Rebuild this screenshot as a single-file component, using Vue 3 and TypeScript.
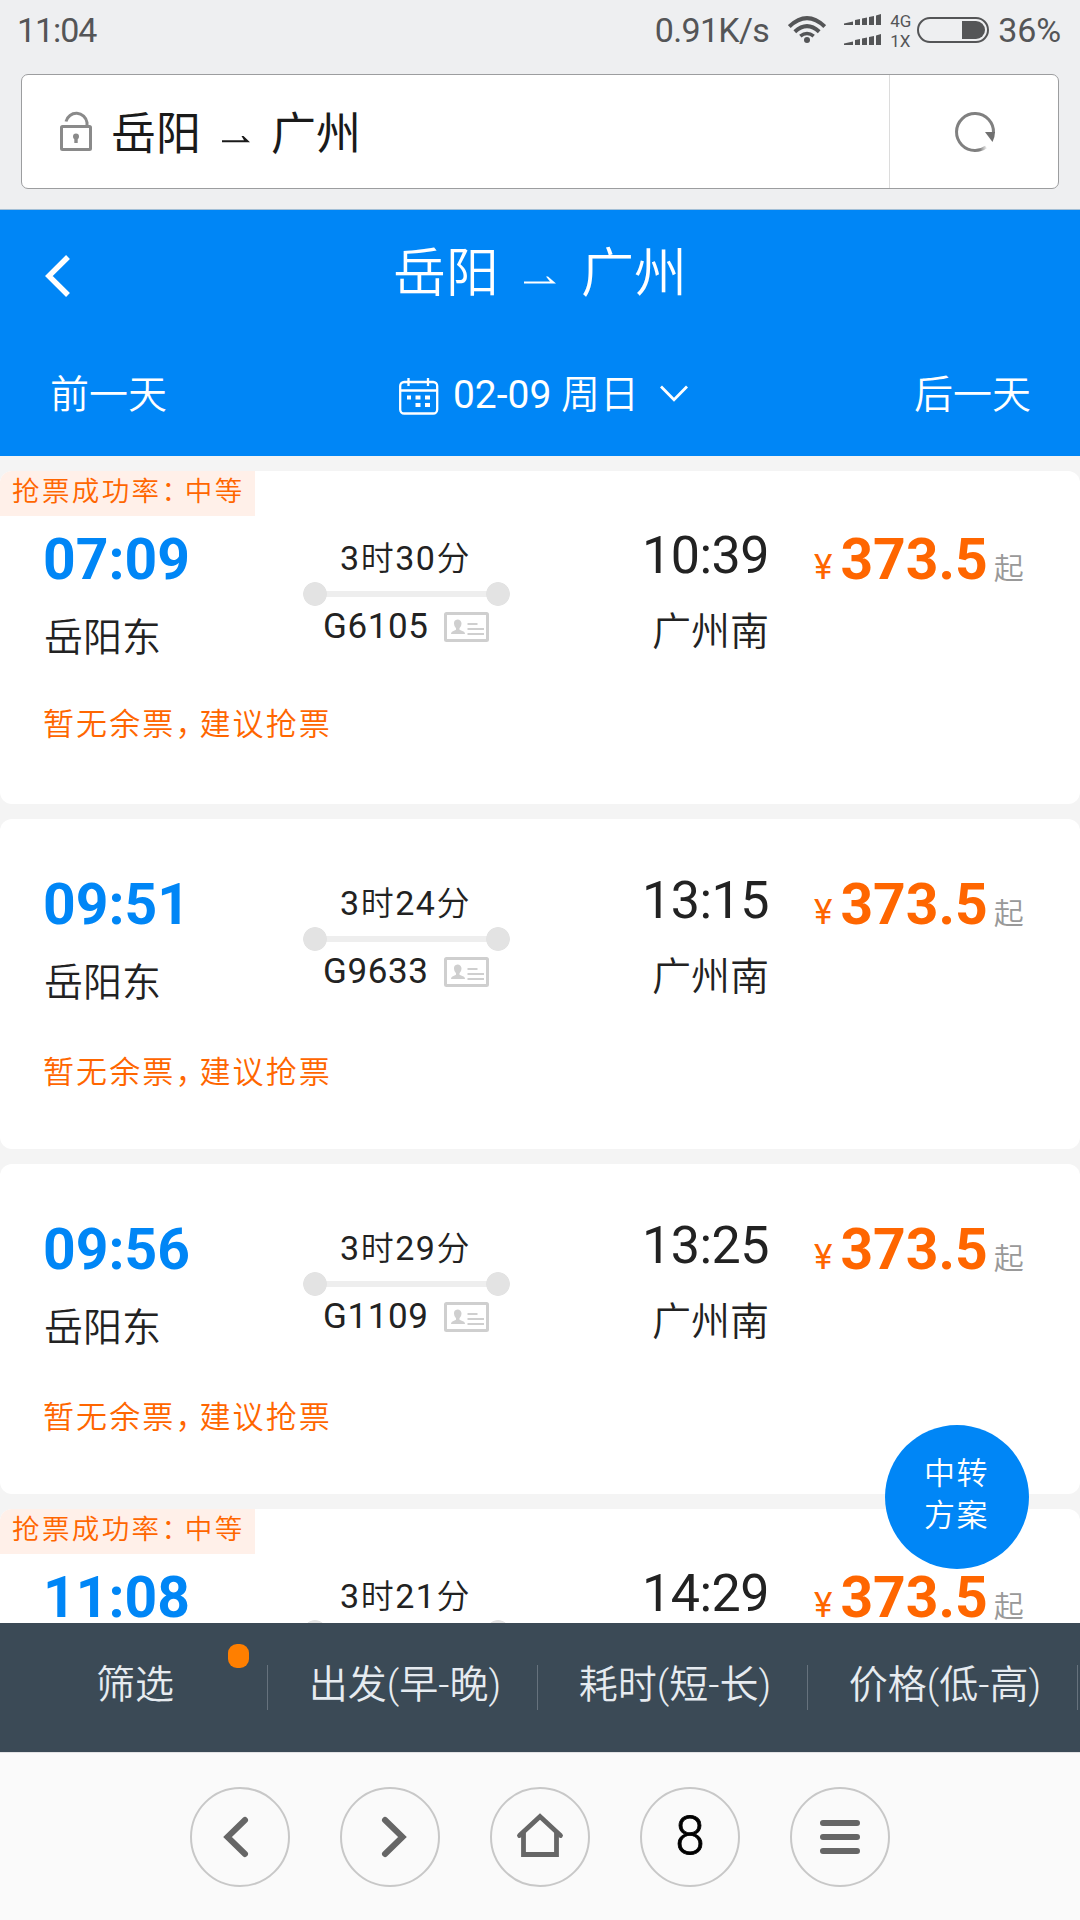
<script setup lang="ts">
interface Trip {
  depart: string
  arrive: string
  minutes: string
  hours: string
  price: string
  tagged: boolean
  detail?: { from: string; to: string; train: string }
}

const base = { hours: '3', price: '373.5' }
const stations = { from: '岳阳东', to: '广州南' }
const trips: Trip[] = [
  { ...base, depart: '07:09', arrive: '10:39', minutes: '30', tagged: true, detail: { ...stations, train: 'G6105' } },
  { ...base, depart: '09:51', arrive: '13:15', minutes: '24', tagged: false, detail: { ...stations, train: 'G9633' } },
  { ...base, depart: '09:56', arrive: '13:25', minutes: '29', tagged: false, detail: { ...stations, train: 'G1109' } },
  { ...base, depart: '11:08', arrive: '14:29', minutes: '21', tagged: true },
]
const filters = ['筛选', '出发(早-晚)', '耗时(短-长)', '价格(低-高)']
</script>

<template>
  <div class="screen">
    <header class="chrome">
      <div class="status">
        <span class="clock">11:04</span>
        <span class="speed">0.91K/s</span>
        <svg class="wifi" viewBox="0 0 38 27" width="38" height="27" fill="none" stroke="#545557" stroke-width="4">
          <path d="M1.3 10.6Q19-6.200 36.700 10.600" />
          <path d="M6.800 15.800Q19 4.600 31.200 15.800" />
          <path d="M12.300 20.200Q19 14.800 25.700 20.200" stroke-width="3.600" />
          <circle cx="19" cy="24" r="3" fill="#545557" stroke="none" />
        </svg>
        <svg class="signal" viewBox="0 0 38 32" width="38" height="32" fill="#545557">
          <g v-for="y in [0, 20]" :key="y" :transform="`translate(0 ${y})`">
            <path d="M0 11V9.500L9 7.500V11zM11 11V6L16 5V11zM18 11V4.500L23 3.500V11zM25 11V3L30 2V11zM32 11V1.500L37 0V11z" />
          </g>
        </svg>
        <span class="nets"><span>4G</span><span>1X</span></span>
        <svg class="battery" viewBox="0 0 72 26" width="72" height="26">
          <rect x="1" y="1" width="70" height="24" rx="12" fill="none" stroke="#545557" stroke-width="2" />
          <path d="M45 4H59a9 9 0 0 1 0 18H45z" fill="#545557" />
        </svg>
        <span class="percent">36%</span>
      </div>
      <div class="address">
        <div class="page">
          <svg class="lock" viewBox="0 0 32 41" width="32" height="41" fill="none" stroke="#8a8a8a">
            <rect x="1.500" y="16.500" width="29" height="23" rx="1" stroke-width="3" />
            <path d="M6 11.500A10.700 10.700 0 0 1 27 12.500V16" stroke-width="3" />
            <circle cx="16" cy="26.500" r="3" fill="#8a8a8a" stroke="none" />
            <path d="M16 27V33" stroke-width="3.400" />
          </svg>
          <span>岳阳</span>
          <svg class="arrow" viewBox="0 0 28 8" width="28" height="8" fill="#1a1a1a"><path d="M0 4.300H22L19.500 0H21.500L28 6.300H0z" /></svg>
          <span>广州</span>
        </div>
        <div class="reload">
          <svg viewBox="0 0 42 42" width="42" height="42">
            <defs>
              <linearGradient id="fade" x1="0" x2="1" y1="0" y2="0">
                <stop offset=".5" stop-color="#808080" />
                <stop offset="1" stop-color="#808080" stop-opacity=".2" />
              </linearGradient>
            </defs>
            <path d="M39.500 22A18.500 18.500 0 1 0 21 39.500" fill="none" stroke="#808080" stroke-width="3" />
            <path d="M20 39.480A18.500 18.500 0 0 0 32 36" fill="none" stroke="url(#fade)" stroke-width="3" />
            <path d="M31 21H41Q41 26 38.500 31z" fill="#707070" />
          </svg>
        </div>
      </div>
    </header>

    <section class="top">
      <div class="titlebar">
        <svg class="back" viewBox="0 0 26 42" width="26" height="42" fill="none" stroke="#fff" stroke-width="5.500">
          <path d="M23 2L3.800 21L23 40" />
        </svg>
        <h1>
          <span>岳阳</span>
          <svg viewBox="0 0 32 8" width="32" height="8" fill="#fff"><path d="M0 5.500H26L22 .5H24L32 7.500H0z" /></svg>
          <span>广州</span>
        </h1>
      </div>
      <div class="days">
        <span class="prev">前一天</span>
        <div class="date">
          <svg class="cal" viewBox="0 0 40 37" width="40" height="37" fill="none" stroke="#fff" stroke-width="2.300">
            <rect x="1.200" y="4" width="37" height="31.500" rx="4" />
            <path d="M1 12.500H38M9.500 0V8M29 0V8" />
            <path d="M8 19.500h4M16.500 19.500h5M26 19.500h5M16.500 27h5M26 27h5" stroke-width="4.200" />
          </svg>
          <span class="day">02-09 <i>周日</i></span>
          <svg class="down" viewBox="0 0 28 17" width="28" height="17" fill="none" stroke="#fff" stroke-width="2.800">
            <path d="M1 1.500L14 14.700L27 1.500" />
          </svg>
        </div>
        <span class="next">后一天</span>
      </div>
    </section>

    <main class="list">
      <article v-for="trip in trips" :key="trip.depart" class="card" :class="{ tagged: trip.tagged }">
        <div v-if="trip.tagged" class="tag">抢票成功率<span class="colon">：</span>中等</div>
        <div class="trip">
          <div class="from">
            <strong>{{ trip.depart }}</strong>
            <span v-if="trip.detail" class="station">{{ trip.detail.from }}</span>
          </div>
          <div class="middle">
            <span class="duration">{{ trip.hours }}<i>时</i>{{ trip.minutes }}<i>分</i></span>
            <div class="track"></div>
            <div v-if="trip.detail" class="train">
              <span>{{ trip.detail.train }}</span>
              <svg viewBox="0 0 45 30" width="45" height="30" fill="none" stroke="#cfcfcf">
                <rect x="1.500" y="1.500" width="42" height="27" rx="1" stroke-width="3" />
                <path d="M13.500 7.500a4 4 0 0 1 4 4.300q0 2.500-2 4.400v1.500l4.500 2q1 .8 1 2.300H7q0-1.500 1-2.300l4-2v-1.500q-2-1.900-2-4.400a4 4 0 0 1 3.500-4.300z" fill="#cfcfcf" stroke="none" />
                <path d="M23.500 12h10M23.500 17h16.500M23.500 22h16.500" stroke-width="2" />
              </svg>
            </div>
          </div>
          <div class="to">
            <span class="arrive">{{ trip.arrive }}</span>
            <span v-if="trip.detail" class="station">{{ trip.detail.to }}</span>
          </div>
          <div class="price"><span class="yen">¥</span><b>{{ trip.price }}</b><span class="qi">起</span></div>
        </div>
        <p v-if="trip.detail" class="note">暂无余票<span class="comma">，</span>建议抢票</p>
      </article>
      <button class="transfer"><span>中转</span><span>方案</span></button>
    </main>

    <nav class="filters">
      <span v-for="(f, i) in filters" :key="f" class="filter">{{ f }}<em v-if="i === 0" class="dot"></em></span>
    </nav>

    <footer class="tools">
      <span class="tool"><svg viewBox="0 0 96 96" width="96" height="96"><path d="M53 31L35.500 48L53 65" /></svg></span>
      <span class="tool"><svg viewBox="0 0 96 96" width="96" height="96"><path d="M43 31L60.500 48L43 65" /></svg></span>
      <span class="tool home"><svg viewBox="0 0 96 96" width="96" height="96"><path d="M27.500 46.500L48 27.500L68.500 46.500" /><path d="M31.500 44V65.500H64.500V44" /></svg></span>
      <span class="tool count">8</span>
      <span class="tool"><svg viewBox="0 0 96 96" width="96" height="96"><path d="M31 34H65M31 48H65M31 62H65" /></svg></span>
    </footer>
  </div>
</template>

<style>
body { margin: 0; background: #f4f4f4; }
</style>

<style scoped>
.screen {
  width: 1080px; height: 1920px; overflow: hidden;
  display: flex; flex-direction: column;
  font-family: Roboto, "Noto Sans CJK SC", sans-serif;
  color: #222; background: #f4f4f4;
}
svg { display: block; flex: none; }
i { font-style: normal; font-weight: 350; }
.chrome { height: 209px; background: #eeeff1; border-bottom: 1px solid #a3bfd6; flex: none; }
.status { height: 74px; display: flex; align-items: flex-start; color: #545557; font-size: 34px; line-height: 40px; }
.clock { margin-left: 17px; margin-top: 10px; letter-spacing: -1.100px; }
.speed { margin-left: auto; margin-top: 10px; letter-spacing: -.7px; }
.wifi { margin: 16px 0 0 19px; }
.signal { margin: 14px 0 0 18px; }
.nets { margin: 11px 0 0 8px; display: flex; flex-direction: column; font-size: 17px; line-height: 20px; width: 27px; }
.battery { margin-top: 17px; }
.percent { margin: 10px 19px 0 9px; letter-spacing: -.1px; }
.address {
  margin: 0 21px; height: 113px; border: 1px solid #9c9d9f; border-radius: 7px;
  background: #fff; display: flex;
}
.page { flex: 1; display: flex; align-items: flex-start; font-size: 45px; line-height: 56px; color: #1a1a1a; padding-top: 32px; }
.lock { margin: 3px 19px 0 38px; }
.page .arrow { margin: 29px 21px 0 21px; }
.reload { width: 166px; padding-left: 2px; border-left: 1px solid #dcdcdc; display: flex; align-items: center; justify-content: center; padding-top: 1px; }

.top { height: 246px; background: #0086f6; color: #fff; flex: none; }
.titlebar { height: 130px; display: flex; position: relative; justify-content: center; }
.back { position: absolute; left: 45px; top: 45px; }
h1 { margin: 0; font-size: 53px; font-weight: 350; line-height: 64px; padding-top: 32px; display: flex; }
h1 svg { margin: 34px 25px 0; }
.days { display: flex; justify-content: space-between; font-size: 39px; line-height: 50px; padding: 30px 49px 0 50px; font-weight: 350; }
.date { display: flex; padding-left: 6px; }
.day { font-weight: 400; }
.cal { margin: 8px 14px 0 0; }
.down { margin: 15px 0 0 21px; }

.list { flex: 1; min-height: 0; overflow: hidden; position: relative; padding-top: 15px; }
.card { height: 330px; background: #fff; border-radius: 12px; margin-bottom: 15px; position: relative; overflow: hidden; }
.card.tagged { height: 333px; }
.tag {
  position: absolute; left: 0; top: 0; width: 243px; height: 45px; padding-left: 12px; line-height: 41px;
  background: #fff0e9; color: #ff6600; font-size: 27.500px; letter-spacing: 2.400px; white-space: nowrap; font-weight: 350;
}
.colon { font-feature-settings: "halt"; letter-spacing: 9.600px; }
.trip { height: 182px; padding-top: 51px; display: flex; }
.tagged .trip { height: 179px; padding-top: 54px; }
.from { margin-left: 44px; width: 259px; padding-top: 5px; display: flex; flex-direction: column; }
.from strong { font-size: 57px; line-height: 60px; font-weight: 700; color: #0086f6; margin-left: -1px; }
.station { font-size: 39px; line-height: 48px; font-weight: 350; }
.from .station { margin-top: 24px; }
.middle { width: 207px; padding-top: 13px; }
.duration { display: block; height: 40px; text-align: center; font-size: 34px; line-height: 40px; letter-spacing: 1.500px; margin-left: -2px; }
.duration i { font-size: 33px; }
.track {
  margin-top: 4px; height: 24px;
  background:
    radial-gradient(circle at 12px 12px, #e3e3e3 11.500px, transparent 12.200px),
    radial-gradient(circle at 195px 12px, #e3e3e3 11.500px, transparent 12.200px),
    linear-gradient(#eee, #eee) 12px 9px / 183px 6px no-repeat;
}
.train { display: flex; margin: 1px 0 0 20px; font-size: 35px; line-height: 40px; letter-spacing: .6px; }
.train span { width: 106px; }
.train svg { margin: 5px 0 0 15px; }
.to { width: 259px; padding-top: 1px; display: flex; flex-direction: column; align-items: flex-end; }
.arrive { font-size: 52px; line-height: 60px; letter-spacing: -.5px; }
.to .station { margin-top: 22px; }
.price { margin-left: 45px; padding-top: 5px; line-height: 60px; color: #ff6600; white-space: nowrap; }
.yen { font-size: 35px; margin-right: 8px; }
.price b { font-size: 57px; }
.qi { font-size: 30px; color: #999; margin-left: 6px; font-weight: 350; }
.note { margin: 1px 0 0 43px; font-size: 31px; line-height: 40px; letter-spacing: 2.100px; color: #ff6600; font-weight: 350; }
.comma { font-feature-settings: "halt"; letter-spacing: 8.600px; }
.transfer {
  position: absolute; left: 885px; top: 969px; width: 144px; height: 144px; border: 0; border-radius: 50%;
  background: #0086f6; color: #fff; font: 350 31px/42px Roboto, "Noto Sans CJK SC", sans-serif; letter-spacing: 1.500px;
  display: flex; flex-direction: column; align-items: center; padding: 28px 1px 0 0;
}
.filters { height: 129px; flex: none; background: #3b4a56; color: #e6ebf0; display: flex; font-weight: 350; }
.filter { width: 270px; height: 129px; text-align: center; font-size: 39px; line-height: 124px; position: relative; }
.filter::after { content: ""; position: absolute; right: 2px; top: 42px; width: 1px; height: 45px; background: #66727d; }
.dot { position: absolute; left: 228px; top: 21px; width: 21px; height: 24px; border-radius: 9px; background: #ff7f00; }
.tools { height: 168px; box-sizing: border-box; flex: none; background: #fafafa; border-top: 1px solid #e2e2e4; padding-top: 34px; display: flex; justify-content: center; gap: 50px; }
.tool { width: 96px; height: 96px; border: 2px solid #c8c8c8; border-radius: 50%; }
.tool path { fill: none; stroke: #666; stroke-width: 6px; stroke-linecap: round; }
.home path { stroke-width: 4.800px; }
.count { font-size: 53px; line-height: 94px; text-align: center; color: #000; font-weight: 300; -webkit-text-stroke: .8px #000; }
</style>
